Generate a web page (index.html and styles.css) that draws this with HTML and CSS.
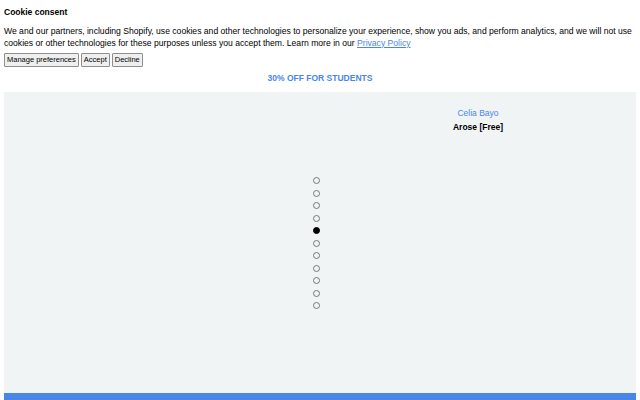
FILE: index.html
```html
<!DOCTYPE html>
<html>
<head>
<meta charset="utf-8">
<link rel="stylesheet" href="styles.css">
</head>
<body>
<section class="consent">
  <h2 class="consent-title">Cookie consent</h2>
  <p class="consent-text">We and our partners, including Shopify, use cookies and other technologies to personalize your experience, show you ads, and perform analytics, and we will not use cookies or other technologies for these purposes unless you accept them. Learn more in our <a href="#">Privacy Policy</a></p>
  <div class="consent-actions">
    <button class="btn">Manage preferences</button>
    <button class="btn">Accept</button>
    <button class="btn">Decline</button>
  </div>
</section>
<div class="promo">30% OFF FOR STUDENTS</div>
<main class="hero">
  <div class="hero-credit">
    <div class="credit-name">Celia Bayo</div>
    <div class="credit-font">Arose [Free]</div>
  </div>
  <div class="dots">
    <span class="dot"></span>
    <span class="dot"></span>
    <span class="dot"></span>
    <span class="dot"></span>
    <span class="dot active"></span>
    <span class="dot"></span>
    <span class="dot"></span>
    <span class="dot"></span>
    <span class="dot"></span>
    <span class="dot"></span>
    <span class="dot"></span>
  </div>
</main>
<div class="bottom-bar"></div>
</body>
</html>
```

FILE: styles.css
```css
html, body {
  margin: 0;
  padding: 0;
  background: #fff;
}
body {
  padding: 0 4px;
  font-family: "Liberation Sans", Arial, sans-serif;
  color: #000;
  overflow: hidden;
  height: 400px;
}
.consent {
  padding-top: 7px;
}
.consent-title {
  margin: 0;
  font-size: 8.5px;
  font-weight: bold;
  line-height: 11px;
}
.consent-text {
  margin: 8px 0 0;
  font-size: 8.6px;
  line-height: 11.5px;
}
.consent-text a {
  color: #4a86e8;
}
.consent-actions {
  display: flex;
  gap: 2px;
  margin-top: 4px;
}
.btn {
  font-family: "Liberation Sans", Arial, sans-serif;
  font-size: 7.5px;
  line-height: 8px;
  padding: 2px 2px;
  background: #efefef;
  border: 1px solid #8f8f8f;
  border-radius: 1px;
  color: #000;
}
.promo {
  text-align: center;
  color: #4a86e8;
  font-weight: bold;
  font-size: 8.5px;
  line-height: 11px;
  margin-top: 6px;
}
.hero {
  margin-top: 8px;
  background: #f0f4f5;
  height: 301px;
  position: relative;
  display: flex;
  justify-content: center;
  padding-top: 85px;
  box-sizing: border-box;
}
.hero-credit {
  position: absolute;
  left: 412px;
  top: 15px;
  width: 124px;
  text-align: center;
}
.credit-name {
  color: #4a86e8;
  font-size: 8.5px;
  line-height: 12px;
}
.credit-font {
  font-weight: bold;
  font-size: 8.5px;
  line-height: 12px;
  margin-top: 2px;
}
.dots {
  display: flex;
  flex-direction: column;
  gap: 5.5px;
  align-items: center;
  margin-right: 8px;
}
.dot {
  width: 7px;
  height: 7px;
  box-sizing: border-box;
  border: 1px solid #777;
  border-radius: 50%;
  background: transparent;
}
.dot.active {
  background: #000;
  border-color: #000;
}
.bottom-bar {
  height: 7px;
  background: #4a86e8;
}
```
